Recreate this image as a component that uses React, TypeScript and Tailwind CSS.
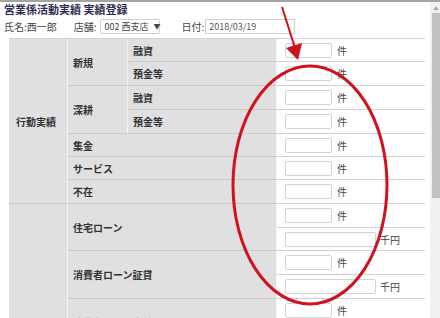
import React from "react";

const jp = { fontFamily: '"Noto Sans CJK JP", "Noto Sans", sans-serif' };

function Lbl({ className, children }: { className: string; children?: React.ReactNode }) {
  return (
    <div
      className={`flex items-center bg-[#e0e0e0] border-b border-r border-b-[#cbcbcb] border-r-[#f3f3f3] pl-[5px] text-[10px] font-semibold text-[#333] whitespace-nowrap ${className}`}
    >
      {children}
    </div>
  );
}

function Field({ className, wide, unit }: { className: string; wide?: boolean; unit: string }) {
  return (
    <div className={`flex items-center bg-white border-b border-[#d2d2d2] pl-[8px] text-[10px] text-[#444] ${className}`}>
      <div
        className={`${wide ? "w-[91px]" : "w-[47px]"} h-[15px] border border-[#d3d3d3] rounded-[2px] bg-white`}
      />
      <span className={wide ? "ml-[4px]" : "ml-[5px]"}>{unit}</span>
    </div>
  );
}

export default function App() {
  return (
    <div className="relative w-[440px] h-[318px] overflow-hidden bg-white border-t-2 border-[#a3a3a3]" style={jp}>
      <div className="flex h-full">
        <div className="w-[430px] pl-[4px]">
          <div className="h-[14px] text-[11px] leading-[14px] font-bold text-[#2e2e52]">
            営業係活動実績 実績登録
          </div>
          <div className="mt-[3px] flex items-center h-[15px] text-[10px] text-[#444] whitespace-nowrap">
            <span>氏名:西一郎</span>
            <span className="ml-[17px]">店舗:</span>
            <div className="ml-[3px] w-[60px] h-[15px] border border-[#cfcfcf] rounded-[2px] flex items-center pl-[4px] text-[9px] whitespace-nowrap">
              002 西支店
              <span className="ml-[5px] text-[7px]">▼</span>
            </div>
            <span className="ml-[22px]">日付:</span>
            <div className="ml-[1px] w-[90px] h-[15px] border border-[#cfcfcf] flex items-center pl-[3px] text-[9px] text-[#555]">
              2018/03/19
            </div>
          </div>
          <div className="mt-[4px] ml-[5px] w-[416px] border-t border-[#d2d2d2] grid grid-cols-[59px_60px_149px_148px] grid-rows-[23px_24px_24px_24px_23px_23px_24px_24px_23px_24px_24px_24px_24px]">
            <Lbl className="col-start-1 row-start-1 row-span-7 pl-[7px]">行動実績</Lbl>
            <Lbl className="col-start-2 row-start-1 row-span-2">新規</Lbl>
            <Lbl className="col-start-3 row-start-1 border-r-[#e0e0e0]">融資</Lbl>
            <Field className="col-start-4 row-start-1" unit="件" />
            <Lbl className="col-start-3 row-start-2 border-r-[#e0e0e0]">預金等</Lbl>
            <Field className="col-start-4 row-start-2" unit="件" />
            <Lbl className="col-start-2 row-start-3 row-span-2">深耕</Lbl>
            <Lbl className="col-start-3 row-start-3 border-r-[#e0e0e0]">融資</Lbl>
            <Field className="col-start-4 row-start-3" unit="件" />
            <Lbl className="col-start-3 row-start-4 border-r-[#e0e0e0]">預金等</Lbl>
            <Field className="col-start-4 row-start-4" unit="件" />
            <Lbl className="col-start-2 col-span-2 row-start-5 border-r-[#e0e0e0]">集金</Lbl>
            <Field className="col-start-4 row-start-5" unit="件" />
            <Lbl className="col-start-2 col-span-2 row-start-6 border-r-[#e0e0e0]">サービス</Lbl>
            <Field className="col-start-4 row-start-6" unit="件" />
            <Lbl className="col-start-2 col-span-2 row-start-7 border-r-[#e0e0e0]">不在</Lbl>
            <Field className="col-start-4 row-start-7" unit="件" />

            <Lbl className="col-start-1 row-start-8 row-span-6" />
            <Lbl className="col-start-2 col-span-2 row-start-8 row-span-2 border-r-[#e0e0e0]">住宅ローン</Lbl>
            <Field className="col-start-4 row-start-8" unit="件" />
            <Field className="col-start-4 row-start-9" wide unit="千円" />
            <Lbl className="col-start-2 col-span-2 row-start-10 row-span-2 border-r-[#e0e0e0]">消費者ローン証貸</Lbl>
            <Field className="col-start-4 row-start-10" unit="件" />
            <Field className="col-start-4 row-start-11" wide unit="千円" />
            <Lbl className="col-start-2 col-span-2 row-start-12 row-span-2 border-r-[#e0e0e0]">消費者ローン当貸</Lbl>
            <Field className="col-start-4 row-start-12" unit="件" />
            <Field className="col-start-4 row-start-13" wide unit="千円" />
          </div>
        </div>
        <div className="w-[10px] bg-[#f1f1f1] flex flex-col items-end">
          <div className="w-[8px] h-[11px] flex items-center justify-center text-[5px] text-[#a3a3a3]">▲</div>
          <div className="w-[8px] h-[185px] bg-[#c1c1c1]" />
        </div>
      </div>

      <svg className="absolute inset-0 pointer-events-none" width="440" height="318" viewBox="0 0 440 318">
        <line x1="282" y1="5" x2="295" y2="46" stroke="#d0121f" strokeWidth="2" />
        <polygon points="286,46 302,41 298,58" fill="#d0121f" />
        <ellipse cx="310" cy="183" rx="77" ry="119" fill="none" stroke="#d0121f" strokeWidth="3" />
      </svg>
    </div>
  );
}
